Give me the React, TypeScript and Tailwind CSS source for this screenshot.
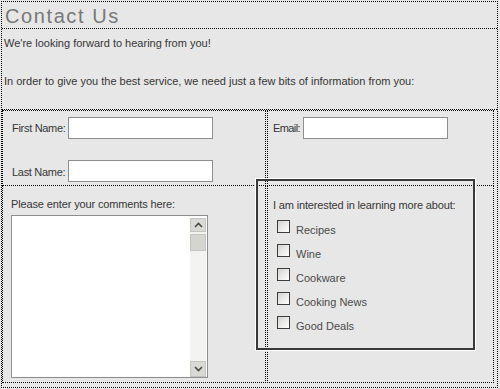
import React from 'react';

const interests = ['Recipes', 'Wine', 'Cookware', 'Cooking News', 'Good Deals'];

function Checkbox() {
  return (
    <span className="block w-[13px] h-[13px] shrink-0 border border-[#3c3c3c] bg-[linear-gradient(135deg,#d4d4ce,#ffffff)]" />
  );
}

function TextBox({ className = '' }: { className?: string }) {
  return <input type="text" className={`h-[22px] w-[145px] bg-white border border-[#8e8e8e] outline-none ${className}`} />;
}

export default function App() {
  return (
    <div
      className="relative w-[500px] h-[389px] overflow-hidden bg-[#e7e7e7] text-[#363636] text-[11px] leading-[13px]"
      style={{ fontFamily: '"Liberation Sans", Arial, sans-serif' }}
    >
      <div className="ml-[1px] mt-[1px] w-[497px] h-[387px] border border-dotted border-black">
        {/* title */}
        <div className="h-[27px] border-b border-dotted border-black pl-[3px] pt-[1px]">
          <h1 className="text-[20px] leading-[26px] tracking-[1.6px] text-[#787878]">Contact Us</h1>
        </div>

        {/* intro */}
        <div className="h-[81px] border-b border-dotted border-black pl-[2px] pt-[8px]">
          <p>We're looking forward to hearing from you!</p>
          <p className="mt-[25px]">In order to give you the best service, we need just a few bits of information from you:</p>
        </div>

        {/* form rows */}
        <div className="flex">
          <div className="w-[264px] h-[76px] border border-dotted border-black pl-[9px] pt-[6px]">
            <div className="flex items-center">
              <span className="w-[56px] shrink-0 tracking-[-0.3px] mt-[1px]">First Name:</span>
              <TextBox />
            </div>
            <div className="flex items-center mt-[21px]">
              <span className="w-[56px] shrink-0 tracking-[-0.3px] mt-[2px]">Last Name:</span>
              <TextBox />
            </div>
          </div>
          <div className="ml-[1px] w-[227px] h-[76px] border border-dotted border-black pl-[5px] pt-[6px]">
            <div className="flex items-center">
              <span className="w-[30px] shrink-0 tracking-[-0.6px] mt-[1px]">Email:</span>
              <TextBox />
            </div>
          </div>
        </div>

        <div className="flex">
          <div className="w-[264px] h-[197px] border-x border-b border-dotted border-black pl-[8px] pt-[12px]">
            <p className="tracking-[-0.13px]">Please enter your comments here:</p>
            <div className="mt-[4px] w-[197px] h-[163px] flex bg-white border border-[#8e8e8e]">
              <textarea className="flex-1 resize-none outline-none bg-white" />
              <div className="w-[16px] mt-[2px] mr-[1px] flex flex-col bg-[#f3f3f1]">
                <div className="h-[14px] flex items-center justify-center bg-[#d9d9d6] border border-[#c4c4c0]">
                  <svg width="9" height="6" viewBox="0 0 9 6"><path d="M1 5 L4.5 1.5 L8 5" stroke="#4a4a4a" strokeWidth="1.6" fill="none" /></svg>
                </div>
                <div className="h-[17px] mt-[2px] bg-[#d4d4d0] border border-[#c4c4c0]" />
                <div className="flex-1" />
                <div className="h-[16px] flex items-center justify-center bg-[#d9d9d6] border border-[#c4c4c0]">
                  <svg width="9" height="6" viewBox="0 0 9 6"><path d="M1 1 L4.5 4.5 L8 1" stroke="#4a4a4a" strokeWidth="1.6" fill="none" /></svg>
                </div>
              </div>
            </div>
          </div>
          <div className="ml-[1px] w-[227px] h-[197px] border-x border-b border-dotted border-black" />
        </div>
      </div>

      {/* interests layer, drawn over the cell borders */}
      <div className="absolute left-[256px] top-[179px] w-[219px] h-[171px] border-2 border-[#3a3a3a] shadow-[0_0_0_1px_#ffffff] pl-[15px] pt-[18px]">
        <p className="tracking-[-0.15px]">I am interested in learning more about:</p>
        <div className="mt-[8px] pl-[4px]">
          {interests.map((item) => (
            <div key={item} className="h-[24px] flex items-start gap-[6px]">
              <Checkbox />
              <span className="mt-[4px] text-[#4a4a4a]">{item}</span>
            </div>
          ))}
        </div>
      </div>
    </div>
  );
}
